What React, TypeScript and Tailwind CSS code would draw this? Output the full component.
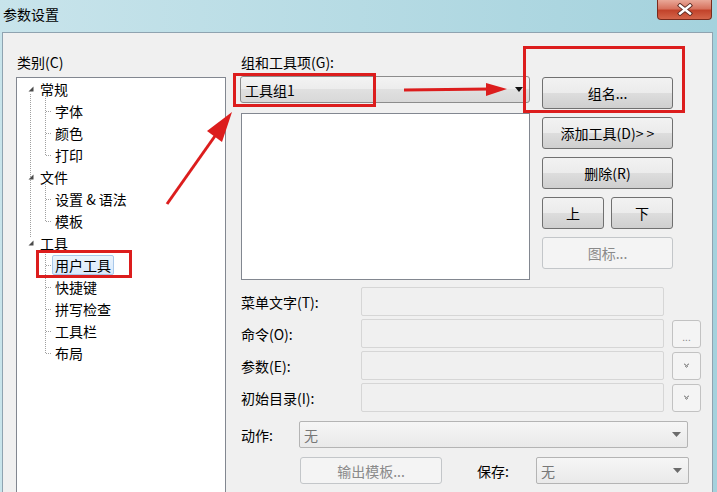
import React from "react";

const treeRows: { t: string; p?: boolean; sel?: boolean }[] = [
  { t: "常规", p: true },
  { t: "字体" },
  { t: "颜色" },
  { t: "打印" },
  { t: "文件", p: true },
  { t: "设置 & 语法" },
  { t: "模板" },
  { t: "工具", p: true },
  { t: "用户工具", sel: true },
  { t: "快捷键" },
  { t: "拼写检查" },
  { t: "工具栏" },
  { t: "布局" },
];

function Tri() {
  return (
    <svg width="6" height="6" viewBox="0 0 6 6" className="shrink-0">
      <polygon points="5.5,0.5 5.5,5.5 0.5,5.5" fill="#4a4a4a" />
    </svg>
  );
}

function TreeLines() {
  const childCenters = [1, 2, 3, 5, 6, 8, 9, 10, 11, 12].map((i) => 11 + 22 * i);
  return (
    <svg className="absolute left-0 top-0 pointer-events-none" width="208" height="420" shapeRendering="crispEdges">
      <g stroke="#a0a0a0" strokeWidth="1" strokeDasharray="1 1" fill="none">
        <line x1="13.5" y1="16" x2="13.5" y2="160" />
        <line x1="28.5" y1="18" x2="28.5" y2="78" />
        <line x1="28.5" y1="106" x2="28.5" y2="144" />
        <line x1="28.5" y1="172" x2="28.5" y2="276" />
        {childCenters.map((y) => (
          <line key={y} x1="29" y1={y + 0.5} x2="35" y2={y + 0.5} />
        ))}
      </g>
    </svg>
  );
}

function Chevrons() {
  return (
    <svg width="7" height="5" viewBox="0 0 7 5">
      <polyline points="1,0.8 3.5,2.6 6,0.8" fill="none" stroke="#707070" strokeWidth="1" />
      <polyline points="2,2.8 3.5,4.2 5,2.8" fill="none" stroke="#707070" strokeWidth="1" />
    </svg>
  );
}

function DownTri({ color }: { color: string }) {
  return (
    <svg width="9" height="5" viewBox="0 0 9 5">
      <polygon points="0,0 9,0 4.5,5" fill={color} />
    </svg>
  );
}

function Overlay() {
  const red = "#dc1d1d";
  return (
    <svg className="absolute left-0 top-0 pointer-events-none" width="717" height="492" viewBox="0 0 717 492">
      <g fill="none" stroke={red} strokeWidth="3">
        <rect x="234.5" y="74.5" width="140" height="31" />
        <rect x="524.5" y="47.5" width="159" height="64" />
        <rect x="37.5" y="251.5" width="93" height="25" />
      </g>
      <line x1="404" y1="90" x2="490" y2="89" stroke={red} strokeWidth="3" />
      <polygon points="486,83 507,89 486,96" fill={red} />
      <line x1="167" y1="204" x2="215" y2="136" stroke={red} strokeWidth="3" />
      <polygon points="207,131 232,112 222,142" fill={red} />
    </svg>
  );
}

export default function App() {
  const btn =
    "h-[32px] w-full flex items-center justify-center rounded-[3px] border border-[#707070] bg-[linear-gradient(#f2f2f2_0%,#ebebeb_50%,#dddddd_50%,#cfcfcf_100%)] text-[14px] text-black";
  const btnDisabled =
    "h-[32px] w-full flex items-center justify-center rounded-[3px] border border-[#c3c6c9] bg-[#f4f4f4] text-[14px] text-[#8a8a8a]";
  const input = "w-[303px] h-full rounded-[2px] border border-[#d6d6d6] bg-[#f0f0f0]";
  const smallBtn =
    "ml-[8px] w-[29px] h-[28px] flex items-center justify-center rounded-[3px] border border-[#c2c2c2] bg-[#f4f4f4]";

  return (
    <div className="relative w-[717px] h-[492px] overflow-hidden flex flex-col bg-gradient-to-r from-[#c8e4eb] to-[#a4d2dd] font-['Noto_Sans_CJK_SC','Noto_Sans',sans-serif] text-[14px] leading-[20px] text-black">
      {/* Title bar */}
      <div className="h-[32px] shrink-0 flex items-start justify-between">
        <div className="pl-[3px] pt-[4px] text-[14px] text-black">参数设置</div>
        <div className="mr-[5px] w-[55px] h-[20px] flex items-center justify-center rounded-b-[4px] border border-t-0 border-[#7a2a1c] bg-[linear-gradient(#e9a898_0%,#d7735f_45%,#c2432b_55%,#d4654a_100%)]">
          <svg width="16" height="13" viewBox="0 0 16 13">
            <g strokeLinecap="square">
              <line x1="3" y1="2.5" x2="13" y2="10.5" stroke="#5a2a22" strokeWidth="4.2" />
              <line x1="13" y1="2.5" x2="3" y2="10.5" stroke="#5a2a22" strokeWidth="4.2" />
              <line x1="3" y1="2.5" x2="13" y2="10.5" stroke="#ffffff" strokeWidth="2.4" />
              <line x1="13" y1="2.5" x2="3" y2="10.5" stroke="#ffffff" strokeWidth="2.4" />
            </g>
          </svg>
        </div>
      </div>

      {/* Body */}
      <div className="flex-1 ml-[2px] mr-[4px] border-l border-t border-r border-[#8fa3b0] bg-[#f0f0f0] flex pl-[13px] pt-[19px]">
        {/* Left column */}
        <div className="w-[210px] flex flex-col">
          <div className="pl-[1px] h-[20px]">类别(C)</div>
          <div className="relative mt-[5px] flex-1 border border-[#828790] border-b-0 bg-white">
            <TreeLines />
            <div className="relative flex flex-col">
              {treeRows.map((r) =>
                r.p ? (
                  <div key={r.t} className="h-[22px] flex items-center pl-[11px]">
                    <Tri />
                    <span className="ml-[6px]">{r.t}</span>
                  </div>
                ) : (
                  <div key={r.t} className="h-[22px] flex items-center pl-[35px]">
                    <span
                      className={
                        r.sel
                          ? "h-[20px] px-[2px] flex items-center rounded-[2px] border border-[#a9c8ea] bg-[linear-gradient(#eaf3fd,#d8e9fb)]"
                          : "h-[20px] px-[2px] flex items-center border border-transparent"
                      }
                    >
                      {r.t}
                    </span>
                  </div>
                )
              )}
            </div>
          </div>
        </div>

        {/* Right column */}
        <div className="ml-[14px] flex flex-col">
          <div className="pl-[1px] h-[20px]">组和工具项(G):</div>
          <div className="mt-[4px] flex">
            <div className="w-[290px] flex flex-col">
              <div className="h-[27px] flex items-center justify-between pl-[4px] pr-[6px] rounded-[3px] border border-[#8c8c8c] bg-[linear-gradient(#f3f3f3_0%,#ececec_50%,#e0e0e0_50%,#d8d8d8_100%)]">
                <span>工具组1</span>
                <svg width="8" height="5" viewBox="0 0 8 5">
                  <polygon points="0,0 8,0 4,5" fill="#111" />
                </svg>
              </div>
              <div className="mt-[10px] ml-[1px] w-[289px] h-[167px] border border-[#828790] bg-white" />
            </div>
            <div className="ml-[12px] mt-[1px] w-[131px] flex flex-col gap-[8px]">
              <div className={btn}>组名...</div>
              <div className={btn}>添加工具(D)&gt; &gt;</div>
              <div className={btn}>删除(R)</div>
              <div className="flex gap-[7px]">
                <div className="h-[32px] w-[62px] flex items-center justify-center rounded-[3px] border border-[#707070] bg-[linear-gradient(#f2f2f2_0%,#ebebeb_50%,#dddddd_50%,#cfcfcf_100%)]">
                  上
                </div>
                <div className="h-[32px] w-[62px] flex items-center justify-center rounded-[3px] border border-[#707070] bg-[linear-gradient(#f2f2f2_0%,#ebebeb_50%,#dddddd_50%,#cfcfcf_100%)]">
                  下
                </div>
              </div>
              <div className={btnDisabled}>图标...</div>
            </div>
          </div>

          {/* Form */}
          <div className="mt-[7px] flex flex-col gap-[3px]">
            <div className="h-[29px] flex items-center">
              <div className="w-[121px] pl-[1px]">菜单文字(T):</div>
              <div className={input} />
            </div>
            <div className="h-[29px] flex items-center">
              <div className="w-[121px] pl-[1px]">命令(O):</div>
              <div className={input} />
              <div className={smallBtn}>
                <span className="text-[10px] leading-[10px] text-[#8a8a8a] pt-[6px]">...</span>
              </div>
            </div>
            <div className="h-[29px] flex items-center">
              <div className="w-[121px] pl-[1px]">参数(E):</div>
              <div className={input} />
              <div className={smallBtn}>
                <Chevrons />
              </div>
            </div>
            <div className="h-[29px] flex items-center">
              <div className="w-[121px] pl-[1px]">初始目录(I):</div>
              <div className={input} />
              <div className={smallBtn}>
                <Chevrons />
              </div>
            </div>
          </div>

          <div className="mt-[9px] h-[27px] flex items-center">
            <div className="w-[59px] pl-[1px]">动作:</div>
            <div className="w-[389px] h-full flex items-center justify-between pl-[4px] pr-[6px] rounded-[2px] border border-[#b4b4b4] bg-[linear-gradient(#f6f6f6,#e9e9e9)] text-[#777]">
              <span>无</span>
              <DownTri color="#6b6b6b" />
            </div>
          </div>

          <div className="mt-[9px] h-[27px] flex items-center">
            <div className="ml-[60px] w-[142px] h-full flex items-center justify-center rounded-[3px] border border-[#c3c6c9] bg-[#f4f4f4] text-[#8a8a8a]">
              输出模板...
            </div>
            <div className="ml-[35px] w-[59px]">保存:</div>
            <div className="w-[153px] h-full flex items-center justify-between pl-[4px] pr-[6px] rounded-[2px] border border-[#b4b4b4] bg-[linear-gradient(#f6f6f6,#e9e9e9)] text-[#777]">
              <span>无</span>
              <DownTri color="#6b6b6b" />
            </div>
          </div>
        </div>
      </div>

      <Overlay />
    </div>
  );
}
